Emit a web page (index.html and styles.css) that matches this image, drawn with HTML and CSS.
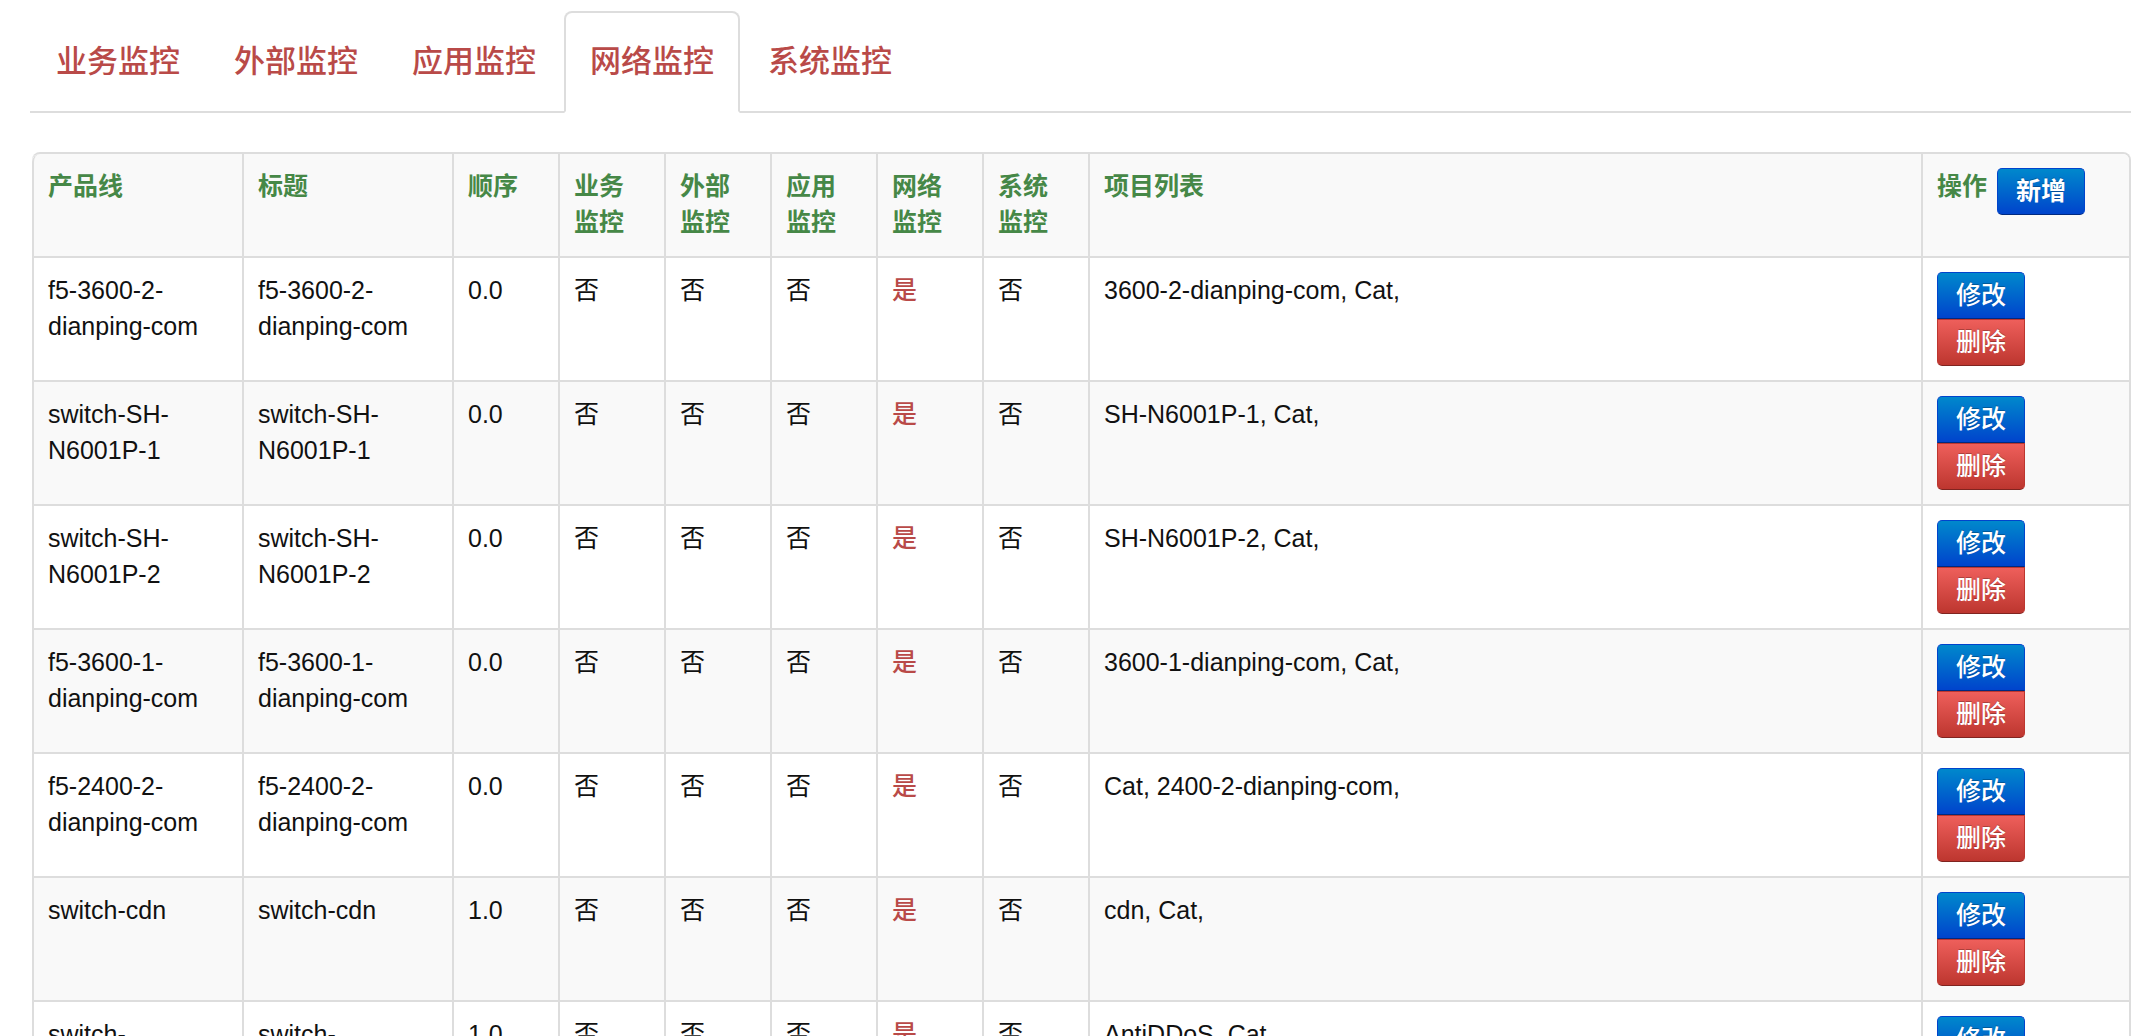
FILE: index.html
```html
<!DOCTYPE html>
<html lang="zh-CN">
<head>
<meta charset="utf-8">
<title>网络监控</title>
<link rel="stylesheet" href="styles.css">
</head>
<body>
<div class="page">
  <ul class="tabs">
    <li><a href="#">业务监控</a></li>
    <li><a href="#">外部监控</a></li>
    <li><a href="#">应用监控</a></li>
    <li class="active"><a href="#">网络监控</a></li>
    <li><a href="#">系统监控</a></li>
  </ul>
  <table class="grid">
    <colgroup>
      <col class="w-wide"><col class="w-wide"><col class="w-narrow"><col class="w-narrow"><col class="w-narrow"><col class="w-narrow"><col class="w-narrow"><col class="w-narrow"><col><col class="w-ops">
    </colgroup>
    <tbody>
      <tr>
        <th>产品线</th><th>标题</th><th>顺序</th><th>业务<br>监控</th><th>外部<br>监控</th><th>应用<br>监控</th><th>网络<br>监控</th><th>系统<br>监控</th><th>项目列表</th>
        <th>操作 <button class="btn btn-primary btn-add">新增</button></th>
      </tr>
      <tr>
        <td>f5-3600-2-dianping-com</td><td>f5-3600-2-dianping-com</td><td>0.0</td><td>否</td><td>否</td><td>否</td><td class="yes">是</td><td>否</td><td>3600-2-dianping-com, Cat,</td>
        <td><div class="stack"><button class="btn btn-primary">修改</button><button class="btn btn-danger">删除</button></div></td>
      </tr>
      <tr>
        <td>switch-SH-N6001P-1</td><td>switch-SH-N6001P-1</td><td>0.0</td><td>否</td><td>否</td><td>否</td><td class="yes">是</td><td>否</td><td>SH-N6001P-1, Cat,</td>
        <td><div class="stack"><button class="btn btn-primary">修改</button><button class="btn btn-danger">删除</button></div></td>
      </tr>
      <tr>
        <td>switch-SH-N6001P-2</td><td>switch-SH-N6001P-2</td><td>0.0</td><td>否</td><td>否</td><td>否</td><td class="yes">是</td><td>否</td><td>SH-N6001P-2, Cat,</td>
        <td><div class="stack"><button class="btn btn-primary">修改</button><button class="btn btn-danger">删除</button></div></td>
      </tr>
      <tr>
        <td>f5-3600-1-dianping-com</td><td>f5-3600-1-dianping-com</td><td>0.0</td><td>否</td><td>否</td><td>否</td><td class="yes">是</td><td>否</td><td>3600-1-dianping-com, Cat,</td>
        <td><div class="stack"><button class="btn btn-primary">修改</button><button class="btn btn-danger">删除</button></div></td>
      </tr>
      <tr>
        <td>f5-2400-2-dianping-com</td><td>f5-2400-2-dianping-com</td><td>0.0</td><td>否</td><td>否</td><td>否</td><td class="yes">是</td><td>否</td><td>Cat, 2400-2-dianping-com,</td>
        <td><div class="stack"><button class="btn btn-primary">修改</button><button class="btn btn-danger">删除</button></div></td>
      </tr>
      <tr>
        <td>switch-cdn</td><td>switch-cdn</td><td>1.0</td><td>否</td><td>否</td><td>否</td><td class="yes">是</td><td>否</td><td>cdn, Cat,</td>
        <td><div class="stack"><button class="btn btn-primary">修改</button><button class="btn btn-danger">删除</button></div></td>
      </tr>
      <tr>
        <td>switch-AntiDDoS</td><td>switch-AntiDDoS</td><td>1.0</td><td>否</td><td>否</td><td>否</td><td class="yes">是</td><td>否</td><td>AntiDDoS, Cat,</td>
        <td><div class="stack"><button class="btn btn-primary">修改</button><button class="btn btn-danger">删除</button></div></td>
      </tr>
    </tbody>
  </table>
</div>
</body>
</html>
```

FILE: styles.css
```css
body {
  margin: 0;
  background: #fff;
  color: #111;
  font-family: "Liberation Sans", "Noto Sans CJK SC", sans-serif;
  font-size: 25px;
  line-height: 36px;
}

.page {
  padding: 11px 11px 0 30px;
}

/* tabs */
.tabs {
  display: flex;
  list-style: none;
  margin: 0 0 39px;
  padding: 0;
  border-bottom: 2px solid #ddd;
}
.tabs li {
  margin: 0 2px -2px 0;
}
.tabs a {
  display: block;
  padding: 31px 24px;
  font-size: 31px;
  font-weight: 500;
  line-height: 36px;
  color: #b94a48;
  text-decoration: none;
  border: 2px solid transparent;
  border-radius: 8px 8px 0 0;
}
.tabs .active a {
  background: #fff;
  border-color: #ddd;
  border-bottom-color: transparent;
}

/* table */
.grid {
  width: calc(100% - 2px);
  margin-left: 2px;
  table-layout: fixed;
  border-collapse: separate;
  border-spacing: 0;
  border: 2px solid #ddd;
  border-left: 0;
  border-radius: 8px;
}
.w-wide { width: 210px; }
.w-narrow { width: 106px; }
.w-ops { width: 208px; }

.grid th,
.grid td {
  padding: 14px;
  text-align: left;
  vertical-align: top;
  border-left: 2px solid #ddd;
  border-top: 2px solid #ddd;
}
.grid th {
  border-top: 0;
  padding-bottom: 16px;
  color: #468847;
  font-weight: bold;
}
.grid th:first-child { border-top-left-radius: 8px; }
.grid th:last-child { border-top-right-radius: 6px; }
.grid tr:nth-child(odd) > * { background: #f9f9f9; }

.grid td.yes { color: #b94a48; font-weight: 500; }

/* buttons */
.btn {
  display: inline-block;
  margin: 0;
  padding: 6px 18px;
  font-family: inherit;
  font-size: 25px;
  font-weight: 500;
  line-height: 33px;
  color: #fff;
  text-shadow: 0 -1px 0 rgba(0, 0, 0, 0.25);
  border: 1px solid;
  border-radius: 5px;
  cursor: pointer;
}
.btn-primary {
  background: linear-gradient(#0088cc, #0044cc);
  border-color: #0044cc #0044cc #002a80;
}
.btn-danger {
  background: linear-gradient(#ee5f5b, #bd362f);
  border-color: #bd362f #bd362f #802420;
}
.btn-add {
  vertical-align: top;
  margin-left: 3px;
  font-weight: bold;
}
.stack {
  display: flex;
  flex-direction: column;
  align-items: flex-start;
}
.stack .btn:first-child { border-radius: 5px 5px 0 0; }
.stack .btn:last-child { border-radius: 0 0 5px 5px; }
```
